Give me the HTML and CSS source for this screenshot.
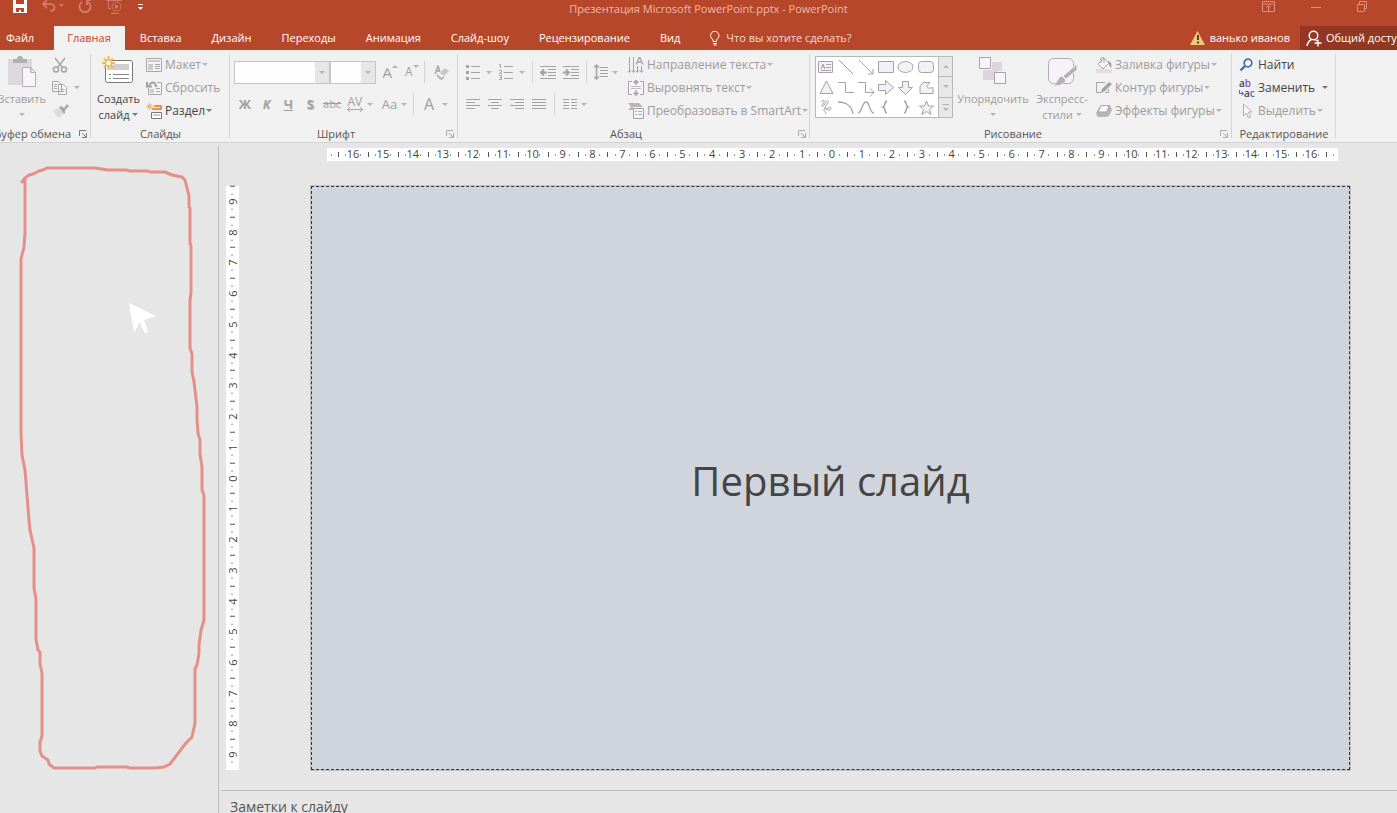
FILE: index.html
```html
<!DOCTYPE html>
<html lang="ru">
<head>
<meta charset="utf-8">
<title>Презентация Microsoft PowerPoint.pptx - PowerPoint</title>
<link rel="stylesheet" href="styles.css">
</head>
<body>
<header class="header">
  <div class="titlebar">
    <div class="quick">
      <button aria-label="Сохранить"><svg width="16" height="14" viewBox="0 0 16 14"><path fill="#fff" fill-rule="evenodd" d="M1 0h14v13H1zM4 0v4h8V0zM4 8v4h3v-2h2v2h3V8z"/></svg></button>
      <button aria-label="Отменить"><svg width="22" height="14" viewBox="0 0 22 14"><path fill="none" stroke="#cf7a65" stroke-width="2" d="M5 0L1 4l4 4M1 4h7c6 0 6 7 0 7"/><path fill="#cf7a65" d="M17 4h5l-2.500 3z"/></svg></button>
      <button aria-label="Повторить"><svg width="14" height="14" viewBox="0 0 14 14"><path fill="none" stroke="#cf7a65" stroke-width="2" d="M10 2a5.500 5.500 0 1 1-6 0M9 5V0h4"/></svg></button>
      <button aria-label="С начала"><svg width="17" height="14" viewBox="0 0 17 14"><g fill="none" stroke="#cf7a65"><path d="M0 .5h16M2.500 1v7.500H5M8 11v2M5 13.500h8"/><circle cx="10.500" cy="6.500" r="4.500"/></g><path fill="#cf7a65" d="M9 4l4 2.500L9 9z"/></svg></button>
      <button aria-label="Настройка панели"><svg width="7" height="7" viewBox="0 0 7 7"><path fill="#fff" d="M1 0h5v1H1zM1 3h5L3.500 6z"/></svg></button>
    </div>
    <h1 class="doc">Презентация Microsoft PowerPoint.pptx - PowerPoint</h1>
    <div class="window">
      <button aria-label="Параметры ленты"><svg width="14" height="11" viewBox="0 0 14 11"><path fill="none" stroke="#d9907e" d="M.5.5h12v10H.5zM.5 3h12M6.500 10V4.500M4.500 6.500l2-2 2 2"/></svg></button>
      <button aria-label="Свернуть"><svg width="11" height="11" viewBox="0 0 11 11"><path stroke="#d9907e" d="M0 6.500h10"/></svg></button>
      <button aria-label="Восстановить"><svg width="11" height="11" viewBox="0 0 11 11"><path fill="none" stroke="#d9907e" d="M.5 3.500h7v7h-7zM2.500 3V.5h7v7H8"/></svg></button>
    </div>
  </div>
  <nav class="tabs">
    <button class="tab file">Файл</button>
    <button class="tab active">Главная</button>
    <button class="tab">Вставка</button>
    <button class="tab">Дизайн</button>
    <button class="tab">Переходы</button>
    <button class="tab">Анимация</button>
    <button class="tab">Слайд-шоу</button>
    <button class="tab">Рецензирование</button>
    <button class="tab">Вид</button>
    <label class="tell"><svg width="10" height="15" viewBox="0 0 10 15"><path fill="none" stroke="#fff" d="M3 10.500V9C2 7.500.5 6.500.5 4.500a4.200 4.200 0 0 1 8.500 0C9 6.500 7.500 7.500 6.500 9v1.500zM3 12.500h4M3.500 14h3"/></svg><input type="text" aria-label="Что вы хотите сделать?" placeholder="Что вы хотите сделать?"></label>
    <button class="account"><svg width="15" height="14" viewBox="0 0 15 14"><path fill="#f2c879" d="M7.500 0L15 14H0z"/><path fill="#444" d="M7 4h2v5H7zM7 10.500h2v2H7z"/></svg>ванько иванов</button>
    <button class="share"><svg width="16" height="17" viewBox="0 0 16 17"><g fill="none" stroke="#fff" stroke-width="1.400"><circle cx="7.500" cy="5.500" r="4.300"/><path d="M5.500 9.500C2.500 11 1.500 13 1 16M9 9.500l2 1.500M12 9.500v7M8.500 13h7"/></g></svg><span>Общий доступ</span></button>
  </nav>
</header>

<main class="ribbon">
  <section class="group g-clip">
    <div class="body">
      <button class="big off"><svg width="28" height="31" viewBox="0 0 28 31"><path fill="#dcd8dc" d="M0 3h24v26H0z"/><path fill="#b0b0b0" d="M5 3h4a3 3 0 0 1 6 0h4v4H5z"/><path fill="#f8f5fa" stroke="#b0b0b0" d="M14.500 11.500h8l5 5v14h-13zM22.500 11.500v5h5"/></svg><span>Вставить</span><i class="caret"></i></button>
      <div class="stack">
        <button class="sm off" aria-label="Вырезать"><svg width="16" height="16" viewBox="0 0 16 16"><g fill="none" stroke="#a8a8a8" stroke-width="1.600"><path d="M3 1l7.500 9.500M13 1L5.500 10.500"/><circle cx="4" cy="12.500" r="2.500"/><circle cx="12" cy="12.500" r="2.500"/></g></svg></button>
        <button class="sm off" aria-label="Копировать"><svg width="16" height="14" viewBox="0 0 16 14"><g fill="#f8f5fa" stroke="#a8a8a8"><path d="M.5.500h6l3 3v7h-9zM6.500 3.500h5l3 3v7h-8z"/><path d="M2 3.500h3M2 5.500h3M2 7.500h3M8.500 8.500h4M8.500 10.500h4"/></g></svg><i class="caret"></i></button>
        <button class="sm off" aria-label="Формат по образцу"><svg width="17" height="14" viewBox="0 0 17 14"><path fill="#dcd8dc" d="M1 7l6-3 5 5-5 5z"/><path fill="#a8a8a8" d="M7 3l2-1 3 2 3-4 2 2-4 4v3l-1 1z"/></svg></button>
      </div>
    </div>
    <footer><span>Буфер обмена</span><button class="launch" aria-label="Параметры буфера"><svg width="8" height="8" viewBox="0 0 8 8"><path fill="none" stroke="#777" d="M.5 6V.5H7M7.500 3v4.500H3M3 3l4 4"/></svg></button></footer>
  </section>

  <section class="group g-slides">
    <div class="body">
      <button class="big"><svg width="32" height="31" viewBox="0 0 32 31"><rect x="3.500" y="4.500" width="27" height="22" rx="2" fill="#fff" stroke="#777"/><path fill="#d0d0d0" d="M12 8h15v6H8v-3z"/><path stroke="#888" d="M7 18.500h2M11 18.500h16M7 22.500h2M11 22.500h16"/><circle cx="6.500" cy="7" r="3" fill="#fff" stroke="#edb95e" stroke-width="1.500"/><path stroke="#edb95e" stroke-width="2" d="M6.500 0v4M6.500 10v4M0 7h4M9 7h4M2 2.500l2.500 2.500M8.500 9l2.500 2.500M11 2.500L8.500 5M4.500 9L2 11.500"/></svg><span>Создать</span><span>слайд<i class="caret"></i></span></button>
      <div class="stack">
        <button class="sm off"><svg width="16" height="14" viewBox="0 0 16 14"><path fill="#f5f2f6" stroke="#a8a8a8" d="M.5.500h15v13H.5z"/><path fill="#ccc8cc" d="M2 2h12v2H2zM2 6h5v6H2z"/><path stroke="#a8a8a8" d="M9 6.500h5M9 8.500h5M9 10.500h5"/></svg>Макет<i class="caret"></i></button>
        <button class="sm off"><svg width="16" height="15" viewBox="0 0 16 15"><path fill="#f5f2f6" stroke="#a8a8a8" d="M2.500 8v6.500h13v-12H11"/><path fill="#ccc8cc" d="M4 9h4v4H4z"/><path stroke="#a8a8a8" d="M10 8.500h4M10 11.500h4"/><path fill="none" stroke="#a0a0a0" stroke-width="2" d="M10 7C10 2 6 1 3 5M1 2v4.500h5"/></svg>Сбросить</button>
        <button class="sm"><svg width="16" height="16" viewBox="0 0 16 16"><path stroke="#edb95e" d="M3.500 0v7M0 3.500h7M1 1l5 5M6 1L1 6"/><path fill="none" stroke="#e0792c" stroke-width="1.500" d="M8 3h7v3H6"/><path fill="#fff" stroke="#777" d="M5.500 9.500h10v6h-10z"/><path fill="#ccc" d="M7 11h7v2H7z"/></svg>Раздел<i class="caret"></i></button>
      </div>
    </div>
    <footer><span>Слайды</span></footer>
  </section>

  <section class="group g-font">
    <div class="body rows">
      <div class="row">
        <span class="combo name"><select aria-label="Шрифт"><option></option></select><i class="drop"></i></span><span class="combo size"><select aria-label="Размер шрифта"><option></option></select><i class="drop"></i></span>
        <button class="ch grow" aria-label="Увеличить шрифт">A<i class="caret up"></i></button>
        <button class="ch shrink" aria-label="Уменьшить шрифт">A<i class="caret"></i></button>
        <i class="bar"></i>
        <button class="ch erase" aria-label="Очистить"><svg width="15" height="15" viewBox="0 0 15 15"><path fill="none" stroke="#a8a8a8" stroke-width="1.500" d="M1 9l3-8 2 6M2 6h3"/><path fill="#c8c4c8" d="M6 8l5-5 4 3-5 5z"/><path fill="none" stroke="#b8b4b8" stroke-width="2" d="M3 10l4 4 3-2"/></svg></button>
      </div>
      <div class="row second">
        <button class="ch"><b>Ж</b></button>
        <button class="ch"><b><em>К</em></b></button>
        <button class="ch"><b><u>Ч</u></b></button>
        <button class="ch shadow"><b>S</b></button>
        <button class="ch strike"><s>abc</s></button>
        <button class="ch wide"><span class="av">AV<svg width="16" height="5" viewBox="0 0 16 5"><path fill="none" stroke="#a8a8a8" d="M0 2.500h16M3 0L.5 2.500 3 5M13 0l2.500 2.500L13 5"/></svg></span><i class="caret"></i></button>
        <button class="ch wide case">Aa<i class="caret"></i></button>
        <i class="bar"></i>
        <button class="ch wide tall">A<i class="caret"></i></button>
      </div>
    </div>
    <footer><span>Шрифт</span><button class="launch" aria-label="Параметры шрифта"><svg width="8" height="8" viewBox="0 0 8 8"><path fill="none" stroke="#aaa" d="M.5 6V.5H7M7.500 3v4.500H3M3 3l4 4"/></svg></button></footer>
  </section>

  <section class="group g-par">
    <div class="body">
      <div class="rows">
        <div class="row">
          <button class="ic" aria-label="Маркеры"><svg width="14" height="16" viewBox="0 0 14 16"><path stroke="#a4a4a4" d="M5 2.500h9M5 8.500h9M5 14.500h9"/><path fill="#a4a4a4" d="M0 1h3v3H0zM0 7h3v3H0zM0 13h3v3H0z"/></svg><i class="caret"></i></button>
          <button class="ic" aria-label="Нумерация"><svg width="14" height="16" viewBox="0 0 14 16"><path fill="none" stroke="#a4a4a4" d="M5 2.500h9M5 8.500h9M5 14.500h9M0 .5h1.500V4M0 6.500h2.500v1.500L.5 9.500H3M0 11.500h2.500v4H0M1 13.500h1"/></svg><i class="caret"></i></button>
          <i class="bar"></i>
          <button class="ic" aria-label="Уменьшить отступ"><svg width="16" height="13" viewBox="0 0 16 13"><path fill="none" stroke="#a4a4a4" d="M0 .5h16M8 3.500h8M8 6.500h8M8 9.500h8M0 12.500h16"/><path fill="none" stroke="#a4a4a4" stroke-width="2" d="M7 6.500H1M4 3.500l-3 3 3 3"/></svg></button>
          <button class="ic" aria-label="Увеличить отступ"><svg width="16" height="13" viewBox="0 0 16 13"><path fill="none" stroke="#a4a4a4" d="M0 .5h16M8 3.500h8M8 6.500h8M8 9.500h8M0 12.500h16"/><path fill="none" stroke="#a4a4a4" stroke-width="2" d="M0 6.500h6M3 3.500l3 3-3 3"/></svg></button>
          <i class="bar"></i>
          <button class="ic tight" aria-label="Интервал"><svg width="14" height="16" viewBox="0 0 14 16"><path fill="none" stroke="#a4a4a4" d="M6 3.500h8M6 6.500h8M6 9.500h8M6 12.500h8"/><path fill="none" stroke="#a4a4a4" stroke-width="1.500" d="M2.500 1v14M0 3.500L2.500 1 5 3.500M0 12.500L2.500 15 5 12.500"/></svg><i class="caret"></i></button>
        </div>
        <div class="row second">
          <button class="ic" aria-label="По левому краю"><svg width="14" height="10" viewBox="0 0 14 10"><path stroke="#a4a4a4" d="M0 .5h14M0 3.500h9M0 6.500h14M0 9.500h9"/></svg></button>
          <button class="ic" aria-label="По центру"><svg width="14" height="10" viewBox="0 0 14 10"><path stroke="#a4a4a4" d="M0 .5h14M3 3.500h8M0 6.500h14M3 9.500h8"/></svg></button>
          <button class="ic" aria-label="По правому краю"><svg width="14" height="10" viewBox="0 0 14 10"><path stroke="#a4a4a4" d="M0 .5h14M5 3.500h9M0 6.500h14M5 9.500h9"/></svg></button>
          <button class="ic" aria-label="По ширине"><svg width="14" height="10" viewBox="0 0 14 10"><path stroke="#a4a4a4" d="M0 .5h14M0 3.500h14M0 6.500h14M0 9.500h14"/></svg></button>
          <i class="bar"></i>
          <button class="ic tight" aria-label="Колонки"><svg width="14" height="10" viewBox="0 0 14 10"><path stroke="#a4a4a4" d="M0 .5h6M8 .5h6M0 3.500h6M8 3.500h6M0 6.500h6M8 6.500h6M0 9.500h6M8 9.500h6"/></svg><i class="caret"></i></button>
        </div>
      </div>
      <div class="stack">
        <button class="sm off"><svg width="16" height="16" viewBox="0 0 16 16"><path fill="none" stroke="#a4a4a4" d="M1.500 0v15M5.500 0v15M9.500 9v6M13.500 9v6M0 13.500l1.500 2 1.500-2M4 13.500l1.500 2 1.500-2M8 13.500l1.500 2 1.500-2M12 13.500l1.500 2 1.500-2"/><path fill="none" stroke="#a4a4a4" stroke-width="1.300" d="M8 7.500L11.500 0 15 7.500M9.500 5h4"/></svg>Направление текста<i class="caret"></i></button>
        <button class="sm off"><svg width="16" height="16" viewBox="0 0 16 16"><path fill="#f8f4fa" d="M1 2h14v12H1z"/><path fill="none" stroke="#a4a4a4" d="M4 1.500H.5v13H4M12 1.500h3.500v13H12"/><path fill="none" stroke="#c0bcc0" d="M3 6.500h10M3 8.500h10"/><path fill="none" stroke="#a4a4a4" stroke-width="1.500" d="M8 0v5M5.500 3L8 .5 10.500 3M8 10v5M5.500 12.500L8 15l2.500-2.500"/></svg>Выровнять текст<i class="caret"></i></button>
        <button class="sm off"><svg width="16" height="16" viewBox="0 0 16 16"><path fill="#b8b4b8" d="M0 0h11l4 4H5v3H0l3-3z"/><path fill="#f8f4fa" stroke="#a4a4a4" d="M5.500 5.500h10v10h-10z"/><path stroke="#b0a8b4" d="M7 8.500h2M10 8.500h4M7 11.500h2M10 11.500h4"/></svg>Преобразовать в SmartArt<i class="caret"></i></button>
      </div>
    </div>
    <footer><span>Абзац</span><button class="launch" aria-label="Параметры абзаца"><svg width="8" height="8" viewBox="0 0 8 8"><path fill="none" stroke="#aaa" d="M.5 6V.5H7M7.500 3v4.500H3M3 3l4 4"/></svg></button></footer>
  </section>

  <section class="group g-draw">
    <div class="body">
      <div class="gallery">
        <svg width="122" height="60" viewBox="0 0 122 60"><g fill="#f4f0f7" stroke="#a6a2a8"><path d="M2.500 4.500h14v11h-14z"/><path fill="none" d="M5 12l2-5 2 5M6 10h3M10 7.500h5M10 10.500h5M5 13.500h10M23 3l14 14M43 3l14 14M57 12v5h-5"/><path d="M62.500 4.500h15v11h-15z"/><ellipse cx="89.500" cy="10" rx="7.500" ry="5.500"/><rect x="102.500" y="4.500" width="15" height="11" rx="3"/><path d="M10.500 24l6.500 12.500H4z"/><path fill="none" d="M22 25.500h7.500v10H38M42 25.500h7.500v10H58M54 31.500l4 4-4 4"/><path d="M62.500 27.500h7v-4l8 7-8 7v-4h-7zM86.500 24.500h6v6h4l-7 7-7-7h4zM107 25.500h7l-3 3c0 3 2 3 6 2v6h-13v-7z"/><path fill="none" d="M5 45c2-3 4-2 3 0l-2 3c-1 2 1 2 2 0l2-3c1-2 3-1 2 1l-3 4c-1 2 1 3 3 1 3-2 4 1 2 2-3 1-5-3-6-1-1 3 3 3 2 5"/><path fill="none" stroke-width="1.300" d="M22 45c9 0 14 5 15 12M42 56c4 0 4-11 8-11s3 11 8 11"/><path fill="none" stroke-width="1.500" d="M71 44c-3 0-1 5-4 6 3 1 1 6 4 6M88 44c3 0 1 5 4 6-3 1-1 6-4 6"/><path d="M110.500 44l2 5h5l-4 3.500 1.500 5-4.500-3-4.500 3 1.500-5-4-3.500h5z"/></g></svg>
        <div class="scroll"><button aria-label="Вверх"><i class="caret up"></i></button><button aria-label="Вниз"><i class="caret"></i></button><button class="more" aria-label="Ещё"><i class="caret"></i></button></div>
      </div>
      <button class="big off arrange"><svg width="28" height="31" viewBox="0 0 28 31"><path fill="#dcd6da" d="M13 6h10v9h-5v9H4V14h9z"/><path fill="#f8f5fa" stroke="#a6a2a8" d="M.5 1.500h11v11H.5zM15.500 16.500h11v11h-11z"/></svg><span>Упорядочить</span><i class="caret"></i></button>
      <button class="big off styles"><svg width="32" height="31" viewBox="0 0 32 31"><rect x="2.500" y="2.500" width="25" height="25" rx="5" fill="#f6f2f8" stroke="#b0acb2"/><path fill="#b4b0b6" stroke="#f1f1f1" d="M31 8v6L20 23l-3-3zM16 20l4 4c-2 5-8 6-13 6 5-3 4-9 9-10z"/></svg><span>Экспресс-</span><span>стили<i class="caret"></i></span></button>
      <div class="stack">
        <button class="sm off"><svg width="16" height="16" viewBox="0 0 16 16"><path fill="#e4dce2" d="M0 12h16v4H0z"/><path fill="#f8f4fa" stroke="#a4a4a4" d="M2 7l6-6 5 5-6 6zM5 6V1c0-1 3-1 3 0v5"/><path fill="#a4a4a4" d="M12 4c4 1 4 4 3 7-2-1-1-4-3-4z"/></svg>Заливка фигуры<i class="caret"></i></button>
        <button class="sm off"><svg width="16" height="14" viewBox="0 0 16 14"><path fill="none" stroke="#a4a4a4" d="M9 1.500H.5v10H5M12.500 8v3.500H9"/><path fill="#a4a4a4" d="M5 12l1-4 7-7 3 2-7 7z"/></svg>Контур фигуры<i class="caret"></i></button>
        <button class="sm off"><svg width="16" height="14" viewBox="0 0 16 14"><path fill="#b8b4b8" d="M1 7l4-6h9l2 5-3 6-3 1H2L0 10z"/><path fill="#faf7fb" stroke="#a8a4a8" d="M5 1.500h8L11 8H2z"/></svg>Эффекты фигуры<i class="caret"></i></button>
      </div>
    </div>
    <footer><span>Рисование</span><button class="launch" aria-label="Формат фигуры"><svg width="8" height="8" viewBox="0 0 8 8"><path fill="none" stroke="#aaa" d="M.5 6V.5H7M7.500 3v4.500H3M3 3l4 4"/></svg></button></footer>
  </section>

  <section class="group g-edit">
    <div class="body">
      <div class="stack">
        <button class="sm"><svg width="16" height="14" viewBox="0 0 16 14"><circle cx="9" cy="5" r="3.800" fill="#fff" stroke="#3f73b0" stroke-width="1.800"/><path stroke="#3f73b0" stroke-width="2.400" d="M6 8l-4.500 4.500"/></svg>Найти</button>
        <button class="sm replace"><span class="abac"><span>a<em>b</em></span><span class="low"><svg width="5" height="6" viewBox="0 0 5 6"><path fill="none" stroke="#3f73b0" d="M.5 0v3.500H4M2.500 1.500l2 2-2 2"/></svg><span>a<q>c</q></span></span></span>Заменить<i class="caret"></i></button>
        <button class="sm off"><svg width="16" height="16" viewBox="0 0 16 16"><path fill="#faf7fb" stroke="#b0acb2" d="M4.500 1v12l3-3 2 5 2-1-2-5H13z"/></svg>Выделить<i class="caret"></i></button>
      </div>
    </div>
    <footer><span>Редактирование</span></footer>
  </section>
</main>

<div class="work">
  <aside class="thumbs">
    <svg width="218" height="640" viewBox="0 150 218 640"><path fill="none" stroke="#e58f8a" stroke-width="3" stroke-linejoin="round" stroke-linecap="round" d="M22 182L25 178 29 175 33 174 39 171 43 170 47 168H95L108 170H127L129 171H148L150 172H165L172 175 182 177 185 180 189 196V207L190 208V243L191 246V293L190 300V348L192 354V372L194 382 197 407V419L198 433 200 440V454L202 467V490L204 495V620L201 630 199 645V653L197 665 195 669V723L192 737 186 743 170 764 164 767 155 768H130L127 767H97L95 768H54L49 764 48 760 42 756 40 751V742L42 736V673L40 664V652L38 650 36 639V599L34 588V548L30 530 29 520 25 470 22 455 21 433V259L24 247 25 233V178"/><path fill="#fff" d="M129 303l27 13-12 4 4 11c0 2-3 3-4 1l-4-10-6 11z"/></svg>
  </aside>
  <section class="stage">
    <ol class="hruler"><li>16</li><li>15</li><li>14</li><li>13</li><li>12</li><li>11</li><li>10</li><li>9</li><li>8</li><li>7</li><li>6</li><li>5</li><li>4</li><li>3</li><li>2</li><li>1</li><li>0</li><li>1</li><li>2</li><li>3</li><li>4</li><li>5</li><li>6</li><li>7</li><li>8</li><li>9</li><li>10</li><li>11</li><li>12</li><li>13</li><li>14</li><li>15</li><li>16</li></ol>
    <div class="canvas">
      <ol class="vruler"><li>9</li><li>8</li><li>7</li><li>6</li><li>5</li><li>4</li><li>3</li><li>2</li><li>1</li><li>0</li><li>1</li><li>2</li><li>3</li><li>4</li><li>5</li><li>6</li><li>7</li><li>8</li><li>9</li></ol>
      <div class="slide"><h2>Первый слайд</h2></div>
    </div>
    <div class="notes">Заметки к слайду</div>
  </section>
</div>
</body>
</html>
```
FILE: styles.css
```css
* { box-sizing: border-box; }
body {
  margin: 0;
  height: 100vh;
  display: flex;
  flex-direction: column;
  overflow: hidden;
  background: #e6e6e6;
  color: #444;
  font: 11px/16px "Open Sans", "Noto Sans", sans-serif;
}
button, input, select { font: inherit; color: inherit; border: 0; padding: 0; margin: 0; background: none; }
button { display: inline-flex; align-items: center; white-space: nowrap; }
svg { display: block; flex: none; }
ol { list-style: none; margin: 0; padding: 0; }

/* title bar and tabs */
.header { flex: none; background: #b7472a; color: #fff; }
.titlebar { display: grid; grid-template-columns: 1fr auto 1fr; height: 26px; align-items: start; }
.quick { display: flex; gap: 14px; padding-left: 12px; }
.quick button { height: 14px; }
.doc { margin: 0; padding: 1px 0 0 20px; font-size: 11px; font-weight: 400; color: #f0b9ab; }
.window { display: flex; justify-content: flex-end; gap: 35px; padding: 1px 29px 0 0; }
.tabs { display: flex; height: 24px; overflow: hidden; font-weight: 500; }
.tab { flex: none; padding: 0 15px; }
.tab.file { padding: 0 20px 0 6px; }
.tab.active { background: #f1f1f1; color: #c8452a; padding: 0 14px 0 13px; }
.tell { display: flex; align-items: center; gap: 6px; margin-left: 15px; flex: 1; }
.tell input { width: 100%; outline: 0; }
.tell input::placeholder { color: #f8dcd4; opacity: 1; }
.account { gap: 5px; flex: none; }
.share { flex: none; width: 97px; margin-left: 10px; padding-left: 6px; gap: 4px; background: #923822; overflow: hidden; }

/* ribbon */
.ribbon { flex: none; display: flex; padding-top: 3px; background: #f1f1f1; border-bottom: 1px solid #d2d2d2; overflow: hidden; }
.group { flex: none; display: flex; flex-direction: column; background: linear-gradient(#d4d4d4, #d4d4d4) right 1px / 1px 84px no-repeat; }
.body { display: flex; height: 69px; }
.group footer { display: flex; align-items: center; height: 16px; margin: 4px 0 0; color: #555; font-weight: 500; }
.group footer span { flex: 1; text-align: center; white-space: nowrap; }
.launch { width: 16px; padding-left: 4px; flex: none; }
.caret { flex: none; display: inline-block; width: 6px; border: 3px solid transparent; border-top-color: #777; border-bottom: 0; }
.off .caret, .ch .caret, .ic .caret, .scroll .caret { border-top-color: #b4b4b4; }
.group .caret.up { border: 3px solid transparent; border-bottom-color: #b4b4b4; border-top: 0; }
.off { color: #9c9c9c; }
.big { flex-direction: column; padding-top: 3px; }
.big svg { margin-bottom: 4px; }
.big > .caret { margin-top: 6px; }
.big span .caret { margin: 0 0 3px 3px; }
.stack { display: flex; flex-direction: column; }
.sm { height: 23px; gap: 1px; font-size: 12px; }
.sm > svg, .abac { margin-right: 2px; }

.g-clip { width: 91px; }
.g-clip .body, .g-clip footer { justify-content: flex-end; }
.g-clip .body { padding-right: 11px; gap: 6px; }
.g-clip .sm { gap: 4px; }
.g-clip footer span { flex: none; margin-right: 4px; }
.g-slides { width: 139px; }
.g-slides .body { padding-left: 6px; gap: 6px; }
.g-font { width: 228px; }
.rows { display: flex; flex-direction: column; }
.row { display: flex; align-items: center; height: 38px; }
.row.second { height: 26px; }
.g-font .body { padding-left: 4px; }
.combo { display: flex; height: 23px; border: 1px solid #c6c6c6; background: #fdfdfd; }
.combo select { flex: 1; min-width: 0; appearance: none; }
.combo.name { width: 98px; }
.combo.size { width: 47px; }
.drop { display: flex; align-items: center; justify-content: center; width: 14px; background: #e6e6e6; }
.drop::after { content: ""; border: 3px solid transparent; border-top-color: #b4b4b4; border-bottom: 0; }
.ch { width: 22px; justify-content: center; color: #a0a0a0; font-size: 12px; }
.ch b { font-size: 13px; }
.strike { font-size: 11px; }
.grow { font-size: 15px; margin-left: 3px; }
.grow .caret, .shrink .caret { margin-bottom: 12px; }
.shrink { font-size: 12px; }
.erase { width: 34px; }
.bar { width: 1px; height: 22px; background: #d2d2d2; flex: none; }
.g-font .bar { margin-left: 1px; }
.shadow b { text-shadow: 1px 1px 1px #bbb; }
.wide { width: 34px; gap: 4px; }
.wide.case { width: 36px; gap: 4px; font-size: 13px; }
.wide.tall { width: 44px; gap: 8px; font-size: 16px; }
.av { display: flex; flex-direction: column; line-height: 11px; }
.g-par { width: 352px; }
.g-par .rows { width: 170px; padding-left: 8px; }
.g-par .row { gap: 7px; }
.g-par .second { gap: 8px; }
.ic { gap: 6px; }
.ic.tight { gap: 4px; }
.g-draw { width: 422px; }
.g-draw .body { padding-left: 5px; }
.gallery { display: flex; height: 62px; margin-top: 3px; border: 1px solid #b8b8b8; background: #fff; }
.scroll { display: flex; flex-direction: column; width: 14px; border-left: 1px solid #b8b8b8; background: #e8e8e8; }
.scroll button { flex: 1; justify-content: center; }
.scroll button + button { border-top: 1px solid #b8b8b8; }
.scroll .more { flex-direction: column; gap: 3px; }
.more::before { content: ""; width: 7px; height: 1px; background: #b4b4b4; }
.arrange { width: 80px; }
.styles { width: 58px; margin-right: 5px; }
.g-edit { width: 104px; }
.g-edit .body { padding-left: 7px; }
.replace .caret { margin-left: 6px; }
.abac { display: flex; flex-direction: column; width: 16px; font-size: 10px; line-height: 10px; font-weight: 600; text-align: left; }
.abac em { font-style: normal; color: #8a4fa8; }
.abac q { quotes: none; color: #3f73b0; }
.low { display: flex; align-items: center; }

/* editing area */
.work { flex: 1; display: flex; min-height: 0; padding-top: 3px; }
.thumbs { width: 219px; flex: none; overflow: hidden; border-right: 1px solid #bdbdbd; padding-top: 4px; }
.stage { flex: 1; min-width: 0; display: flex; flex-direction: column; padding: 2px 0 0 2px; }
.hruler { display: flex; flex: none; height: 13px; margin: 0 59px 0 106px; padding: 0 11px; line-height: 12px;
  background:
    linear-gradient(#999, #999) 4px 6px / 1px 2px no-repeat,
    linear-gradient(#999, #999) right 4px top 6px / 1px 2px no-repeat,
    #fff; }
.hruler li { flex: 1 1 0; min-width: 0; text-align: center;
  background:
    linear-gradient(#555, #555) left 4px / 1px 5px no-repeat,
    linear-gradient(#999, #999) 25% 6px / 1px 2px no-repeat,
    linear-gradient(#999, #999) 75% 6px / 1px 2px no-repeat; }
.hruler li:last-child { border-right: 1px solid #555; border-image: linear-gradient(transparent 4px, #555 4px, #555 9px, transparent 9px) 1; }
.canvas { flex: 1; min-height: 0; display: flex; gap: 72px; padding: 25px 47px 20px 5px; }
.vruler { display: flex; flex-direction: column; width: 13px; background: #fff; line-height: 13px; }
.vruler li { flex: 1 1 0; min-height: 0; writing-mode: vertical-rl; transform: rotate(180deg); text-align: center;
  background:
    linear-gradient(#555, #555) 4px bottom / 5px 1px no-repeat,
    linear-gradient(#999, #999) 6px 25% / 2px 1px no-repeat,
    linear-gradient(#999, #999) 6px 75% / 2px 1px no-repeat; }
.slide { flex: 1; display: flex; align-items: center; justify-content: center; background: #d0d4dd; border: 1px dashed #333; outline: 1px solid #bfc0c2; }
.slide h2 { margin: 0; padding-top: 6px; font-size: 40px; line-height: 56px; font-weight: 400; }
.notes { flex: none; height: 23px; padding: 7px 0 0 9px; border-top: 1px solid #bdbdbd; font-size: 14px; line-height: 18px; overflow: hidden; color: #555; }
```
